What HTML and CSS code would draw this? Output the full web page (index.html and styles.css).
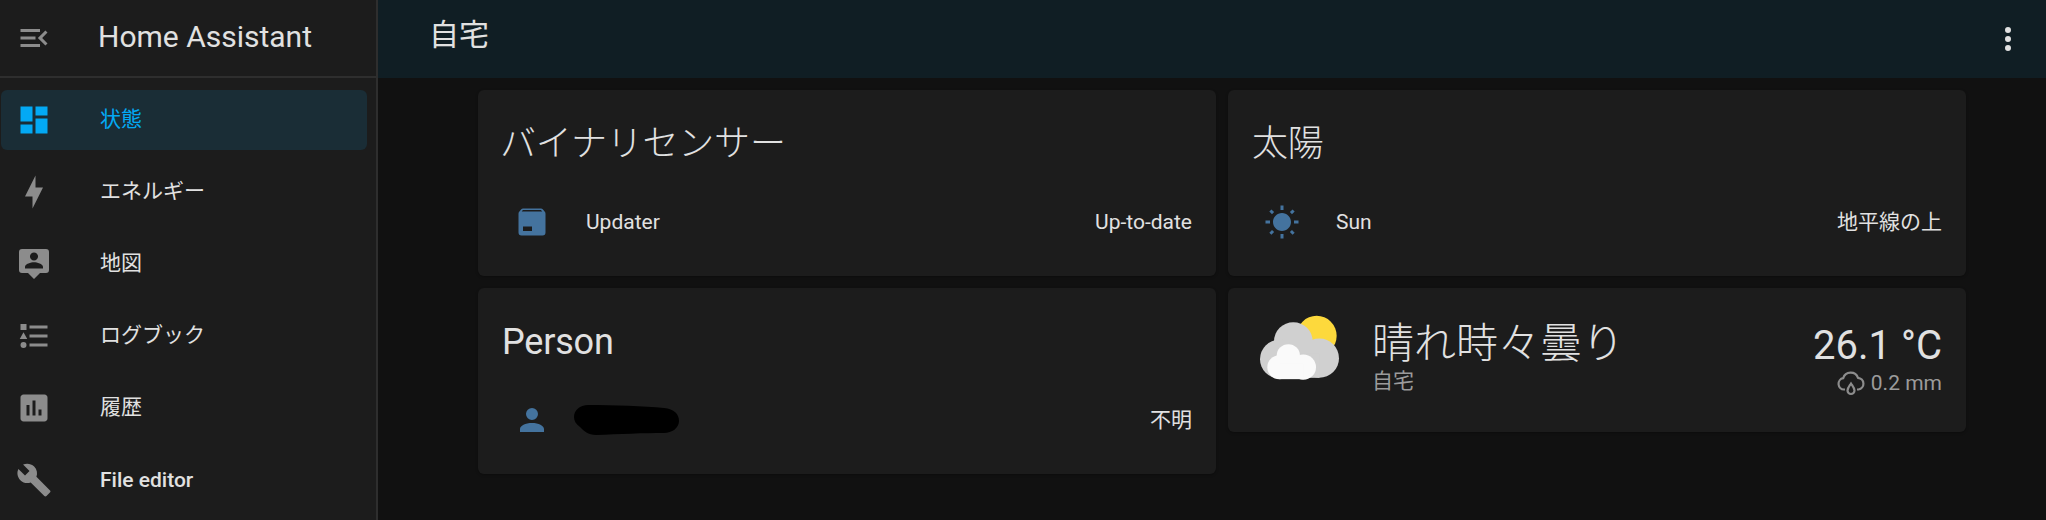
FILE: index.html
```html
<!DOCTYPE html>
<html lang="ja">
<head>
<meta charset="utf-8">
<title>Home Assistant</title>
<link rel="stylesheet" href="styles.css">
</head>
<body>
<aside class="sidebar">
  <div class="brand">
    <svg class="icon" viewBox="0 0 24 24"><path d="M21,15.61L19.59,17L14.58,12L19.59,7L21,8.39L17.44,12L21,15.61M3,6H16V8H3V6M3,13V11H13V13H3M3,18V16H16V18H3Z"/></svg>
    <span class="brand-name">Home Assistant</span>
  </div>
  <nav class="nav">
    <a class="nav-item active"><svg class="icon" viewBox="0 0 24 24"><path d="M13,3V9H21V3M13,21H21V11H13M3,21H11V15H3M3,13H11V3H3V13Z"/></svg><span class="nav-ja">状態</span></a>
    <a class="nav-item"><svg class="icon" viewBox="0 0 24 24"><path d="M11 15H6L13 1V9H18L11 23V15Z"/></svg><span class="nav-ja">エネルギー</span></a>
    <a class="nav-item"><svg class="icon" viewBox="0 0 24 24"><path fill-rule="evenodd" d="M4,2A2,2 0 0,0 2,4V16A2,2 0 0,0 4,18H8L12,22L16,18H20A2,2 0 0,0 22,16V4A2,2 0 0,0 20,2H4M12,4.3C13.5,4.3 14.7,5.5 14.7,7C14.7,8.5 13.5,9.7 12,9.7C10.5,9.7 9.3,8.5 9.3,7C9.3,5.5 10.5,4.3 12,4.3M18,15H6V14C6,12 10,10.9 12,10.9C14,10.9 18,12 18,14V15Z"/></svg><span class="nav-ja">地図</span></a>
    <a class="nav-item"><svg class="icon" viewBox="0 0 24 24"><path d="M5,9.5L7.5,14H2.5L5,9.5M3,4H7V8H3V4M5,20A2,2 0 0,0 7,18A2,2 0 0,0 5,16A2,2 0 0,0 3,18A2,2 0 0,0 5,20M9,5V7H21V5H9M9,19H21V17H9V19M9,13H21V11H9V13Z"/></svg><span class="nav-ja">ログブック</span></a>
    <a class="nav-item"><svg class="icon" viewBox="0 0 24 24"><path d="M19 3H5C3.9 3 3 3.9 3 5V19C3 20.1 3.9 21 5 21H19C20.1 21 21 20.1 21 19V5C21 3.9 20.1 3 19 3M9 17H7V10H9V17M13 17H11V7H13V17M17 17H15V13H17V17Z"/></svg><span class="nav-ja">履歴</span></a>
    <a class="nav-item strong"><svg class="icon" viewBox="0 0 24 24"><path d="M22.7,19L13.6,9.9C14.5,7.6 14,4.9 12.1,3C10.1,1 7.1,0.6 4.7,1.7L9,6L6,9L1.6,4.7C0.4,7.1 0.9,10.1 2.9,12.1C4.8,14 7.5,14.5 9.8,13.6L18.9,22.7C19.3,23.1 19.9,23.1 20.3,22.7L22.6,20.4C23.1,20 23.1,19.3 22.7,19Z"/></svg><span>File editor</span></a>
  </nav>
</aside>
<div class="main">
  <header class="topbar">
    <h1 class="page-title">自宅</h1>
    <svg class="icon more" viewBox="0 0 24 24"><path d="M12,16A2,2 0 0,1 14,18A2,2 0 0,1 12,20A2,2 0 0,1 10,18A2,2 0 0,1 12,16M12,10A2,2 0 0,1 14,12A2,2 0 0,1 12,14A2,2 0 0,1 10,12A2,2 0 0,1 12,10M12,4A2,2 0 0,1 14,6A2,2 0 0,1 12,8A2,2 0 0,1 10,6A2,2 0 0,1 12,4Z"/></svg>
  </header>
  <main class="columns">
    <div class="column">
      <section class="card">
        <h2 class="card-title card-title-ja card-title-kana">バイナリセンサー</h2>
        <div class="row">
          <svg class="icon state" viewBox="0 0 24 24"><path fill-rule="evenodd" d="M5.12,5L5.94,4H17.94L18.87,5H5.12M20.54,5.23L19.15,3.55C18.88,3.21 18.47,3 18,3H6C5.53,3 5.12,3.21 4.84,3.55L3.46,5.23C3.17,5.57 3,6 3,6.5V19A2,2 0 0,0 5,21H19A2,2 0 0,0 21,19V6.5C21,6 20.83,5.57 20.54,5.23M6,18H12V15H6V18Z"/></svg>
          <span class="row-name">Updater</span>
          <span class="row-value">Up-to-date</span>
        </div>
      </section>
      <section class="card">
        <h2 class="card-title">Person</h2>
        <div class="row">
          <svg class="icon state" viewBox="0 0 24 24"><path d="M12,4A4,4 0 0,1 16,8A4,4 0 0,1 12,12A4,4 0 0,1 8,8A4,4 0 0,1 12,4M12,14C16.42,14 20,15.79 20,18V20H4V18C4,15.79 7.58,14 12,14Z"/></svg>
          <svg class="scribble" viewBox="0 0 106 32"><path d="M14 1C40 1 70 2 90 4C100 5 105 10 105 17C105 24 98 29 90 29C70 29 45 30 22 31C14 31 10 27 6 23C2 20 0 17 0 13C0 6 6 1 14 1Z"/></svg>
          <span class="row-value row-value-ja">不明</span>
        </div>
      </section>
    </div>
    <div class="column">
      <section class="card">
        <h2 class="card-title card-title-ja">太陽</h2>
        <div class="row">
          <svg class="icon state" viewBox="0 0 24 24"><path d="M3.55 19.09L4.96 20.5L6.76 18.71L5.34 17.29M12 6C8.69 6 6 8.69 6 12S8.69 18 12 18 18 15.31 18 12C18 8.68 15.31 6 12 6M20 13H23V11H20M17.24 18.71L19.04 20.5L20.45 19.09L18.66 17.29M20.45 5L19.04 3.6L17.24 5.39L18.66 6.81M13 1H11V4H13M6.76 5.39L4.96 3.6L3.55 5L5.34 6.81L6.76 5.39M1 13H4V11H1M13 20H11V23H13"/></svg>
          <span class="row-name">Sun</span>
          <span class="row-value row-value-ja">地平線の上</span>
        </div>
      </section>
      <section class="card weather">
        <svg class="weather-art" viewBox="120 100 240 200">
          <circle class="sun" cx="290" cy="168" r="60"/>
          <g class="cloud-back">
            <circle cx="220" cy="185" r="58"/>
            <circle cx="178" cy="238" r="58"/>
            <circle cx="298" cy="235" r="59"/>
            <rect x="178" y="220" width="120" height="74"/>
          </g>
          <g class="cloud-front">
            <circle cx="205" cy="228" r="35"/>
            <circle cx="178" cy="262" r="36"/>
            <circle cx="250" cy="262" r="38"/>
            <rect x="178" y="250" width="72" height="48"/>
          </g>
        </svg>
        <div class="weather-main">
          <div class="weather-state">晴れ時々曇り</div>
          <div class="weather-place">自宅</div>
        </div>
        <div class="weather-side">
          <div class="weather-temp">26.1 °C</div>
          <div class="weather-rain">
            <svg class="rain-icon" viewBox="0 0 28 28"><path d="M8 20.5H7A5.7 5.7 0 0 1 6.2 9.2A7.8 7.8 0 0 1 21 8.8A5.9 5.9 0 0 1 21.5 20.5H20"/><path d="M14 14.5C16 17.5 17.5 19 17.5 21.5A3.5 3.5 0 0 1 10.5 21.5C10.5 19 12 17.5 14 14.5Z"/></svg>
            <span>0.2 mm</span>
          </div>
        </div>
      </section>
    </div>
  </main>
</div>
</body>
</html>
```
FILE: styles.css
```css
* { box-sizing: border-box; }
html, body { height: 100%; }
body {
  margin: 0;
  display: flex;
  overflow: hidden;
  background: #111111;
  color: #e1e1e1;
  font-family: Roboto, "Noto Sans CJK JP", sans-serif;
  font-size: 21px;
}
.icon { width: 36px; height: 36px; flex: none; fill: #8c8c8c; display: block; }

.sidebar {
  width: 378px;
  flex: none;
  background: #1c1c1c;
  border-right: 2px solid #2e2e2e;
}
.brand {
  height: 78px;
  display: flex;
  align-items: center;
  padding-left: 16px;
  border-bottom: 2px solid #2e2e2e;
}
.brand-name { margin-left: 46px; padding-bottom: 3px; font-size: 30px; font-weight: 400; line-height: 1; color: #e1e1e1; }
.nav { display: flex; flex-direction: column; padding-top: 12px; }
.nav-item {
  height: 60px;
  margin: 0 9px 12px 1px;
  padding-left: 15px;
  border-radius: 6px;
  display: flex;
  align-items: center;
  font-weight: 400;
  color: #e1e1e1;
}
.nav-item span { margin-left: 48px; }
.nav-item .nav-ja { padding-bottom: 6px; }
.nav-item.strong { font-weight: 500; }
.nav-item.active { background: #1a2d36; color: #03a9f4; }
.nav-item.active .icon { fill: #03a9f4; }

.main { flex: 1; min-width: 0; display: flex; flex-direction: column; }
.topbar {
  height: 78px;
  flex: none;
  background: #101e24;
  display: flex;
  align-items: center;
  justify-content: space-between;
  padding: 0 20px 0 51px;
}
.page-title { margin: 0; padding-bottom: 8px; font-size: 30px; font-weight: 400; line-height: 1; }
.more { fill: #e1e1e1; }

.columns {
  display: grid;
  grid-template-columns: 1fr 1fr;
  column-gap: 12px;
  align-items: start;
  padding: 12px 80px 0 100px;
}
.column { display: flex; flex-direction: column; gap: 12px; }
.card {
  background: #1c1c1c;
  border-radius: 6px;
  height: 186px;
  padding: 0 24px;
  box-shadow: 0 1px 3px rgba(0, 0, 0, 0.3);
}
.card-title {
  margin: 0;
  padding-top: 30px;
  height: 102px;
  font-size: 36px;
  line-height: 48px;
  font-weight: 400;
  letter-spacing: -0.2px;
}
.card-title-ja { font-weight: 300; }
.card-title-kana { text-indent: -2px; }
.row { height: 60px; display: flex; align-items: center; font-weight: 400; }
.state { fill: #44739e; margin-left: 12px; }
.row-name { margin-left: 36px; flex: 1; }
.row-value { margin-left: auto; }
.row-value-ja { padding-bottom: 4px; }
.scribble { width: 106px; height: 32px; margin-left: 24px; fill: #000; flex: none; }

.weather { height: 144px; display: flex; align-items: flex-start; }
.weather-art { width: 80px; height: 67px; flex: none; margin: 25px 0 0 8px; }
.sun { fill: #fdd93c; }
.cloud-back { fill: #d0d0d0; }
.cloud-front { fill: #fafafa; }
.weather-main { margin-left: 32px; padding-top: 32px; }
.weather-state { font-size: 42px; line-height: 48px; font-weight: 300; }
.weather-place { font-size: 21px; line-height: 26px; font-weight: 400; color: #9b9b9b; }
.weather-side { margin-left: auto; padding-top: 35px; text-align: right; }
.weather-temp { font-size: 40px; line-height: 46px; font-weight: 400; }
.weather-rain {
  display: flex;
  align-items: center;
  justify-content: flex-end;
  gap: 6px;
  line-height: 26px;
  color: #9b9b9b;
}
.rain-icon { width: 28px; height: 28px; fill: none; stroke: #8c8c8c; stroke-width: 2.2; }
```
